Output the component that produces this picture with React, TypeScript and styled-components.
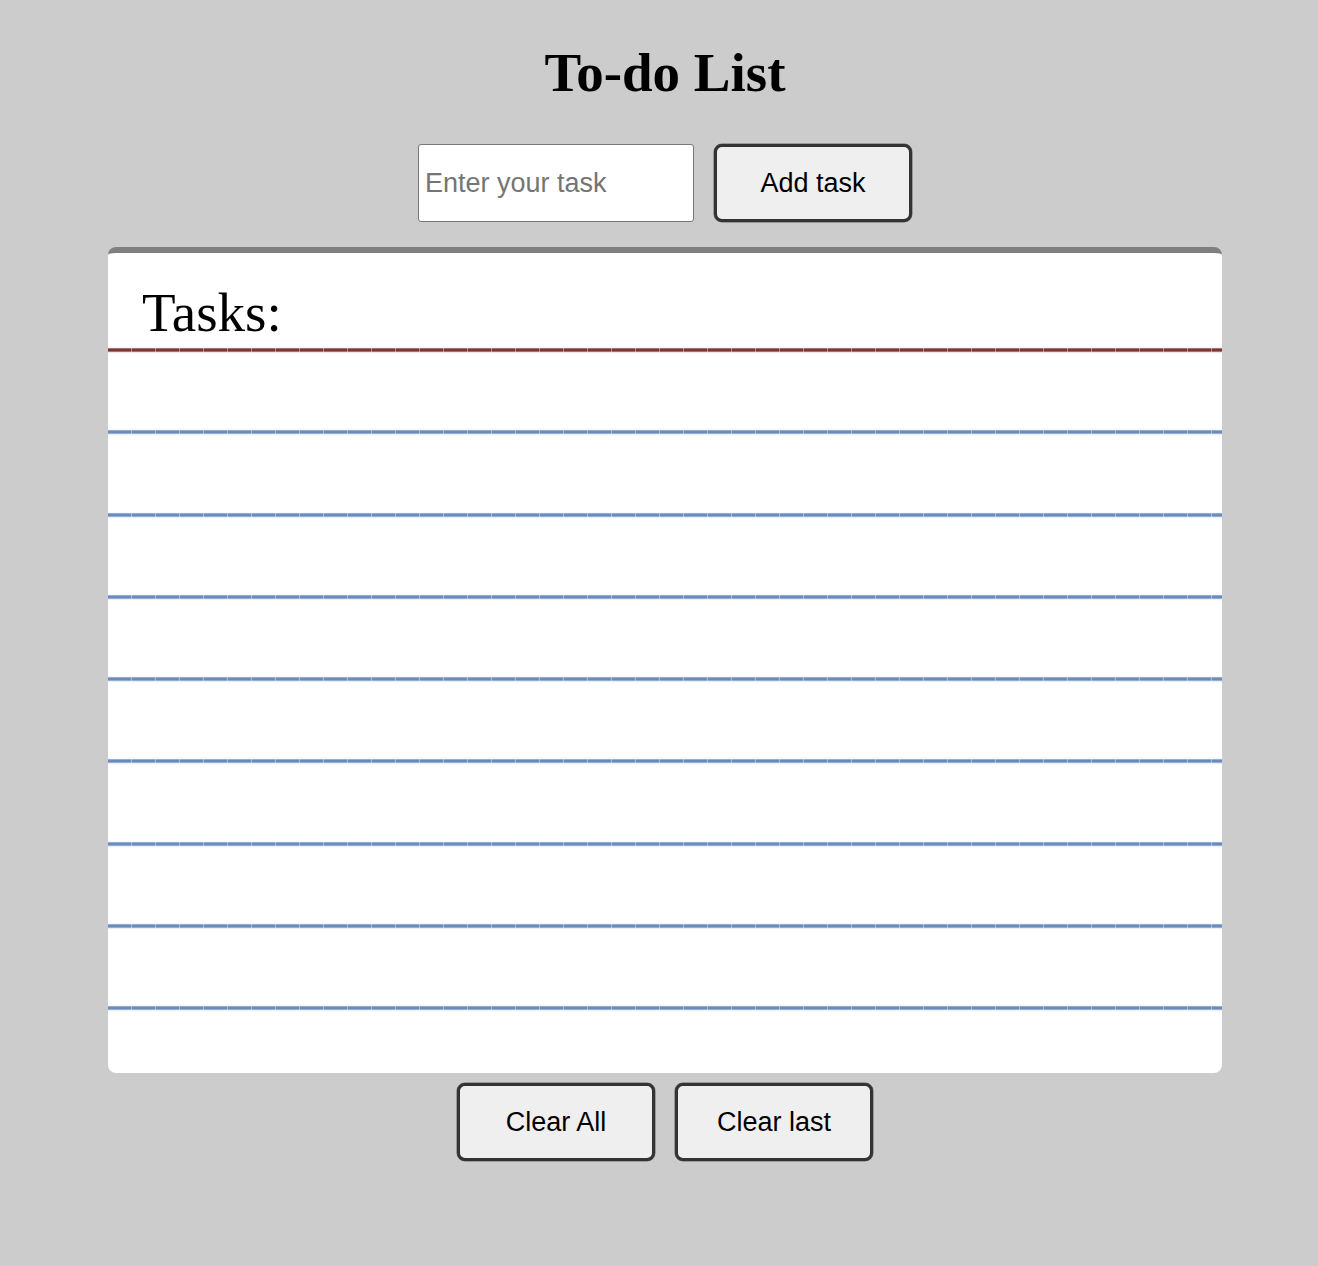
import React, { useState } from 'react';
import styled, { createGlobalStyle } from 'styled-components';

const GlobalStyle = createGlobalStyle`
	html, body {
		margin: 0;
		padding: 0;
		background: #cccccc;
	}
`;

const Page = styled.div`
	display: flex;
	flex-direction: column;
	align-items: center;
	padding: 41px 0 80px 12px;
	font-family: "Liberation Serif", "Times New Roman", serif;
`;

const Title = styled.h1`
	margin: 0;
	font-size: 55px;
	font-weight: bold;
	line-height: normal;
	color: #000;
`;

const Form = styled.div`
	display: flex;
	gap: 20px;
	margin-top: 40px;
`;

const TaskInput = styled.input`
	box-sizing: border-box;
	width: 276px;
	height: 78px;
	padding: 0 6px;
	border: 1px solid #767676;
	border-radius: 3px;
	background: #fff;
	font-family: "Liberation Sans", Arial, sans-serif;
	font-size: 27px;
	color: #000;

	&::placeholder {
		color: #757575;
	}
`;

const Button = styled.button`
	box-sizing: border-box;
	width: 198px;
	height: 78px;
	border: 3px solid #333;
	border-radius: 8px;
	box-shadow: 0 0 0 0.5px #666;
	background: #efefef;
	font-family: "Liberation Sans", Arial, sans-serif;
	font-size: 27px;
	color: #000;
	cursor: pointer;
`;

const Card = styled.div`
	box-sizing: border-box;
	width: 1114px;
	height: 826px;
	margin-top: 25px;
	border-top: 6px solid #808080;
	border-radius: 8px;
	background: #fff;
	overflow: hidden;
`;

const Header = styled.div`
	box-sizing: border-box;
	height: 95px;
	padding: 28px 0 0 34px;
`;

const Heading = styled.h2`
	margin: 0;
	font-size: 55px;
	font-weight: normal;
	line-height: normal;
	color: #000;
`;

const Rule = styled.div<{ $color: string; $edge: string }>`
	height: 4px;
	background:
		repeating-linear-gradient(
			to right,
			transparent 0,
			transparent 23px,
			rgba(255, 255, 255, 0.4) 23px,
			rgba(255, 255, 255, 0.4) 24px
		),
		linear-gradient(
			to bottom,
			${(p) => p.$edge} 0,
			${(p) => p.$color} 25%,
			${(p) => p.$color} 75%,
			${(p) => p.$edge} 100%
		);
	box-shadow: 0 0 1.5px 0.5px ${(p) => p.$edge};
`;

const Row = styled.div`
	height: 78.3px;
	display: flex;
	align-items: flex-end;
	padding: 0 34px 6px;
	box-sizing: border-box;
	font-size: 32px;
`;

const Actions = styled.div`
	display: flex;
	gap: 20px;
	margin-top: 10px;
`;

const LINES = 8;

const App = () => {
	const [task, setTask] = useState('');
	const [tasks, setTasks] = useState<string[]>([]);

	const addTask = () => {
		if (!task.trim()) return;
		setTasks([...tasks, task.trim()]);
		setTask('');
	};

	return (
		<>
			<GlobalStyle />
			<Page>
				<Title>To-do List</Title>
				<Form>
					<TaskInput
						placeholder="Enter your task"
						value={task}
						onChange={(event) => setTask(event.target.value)}
						onKeyDown={(event) => event.key === 'Enter' && addTask()}
					/>
					<Button onClick={addTask}>Add task</Button>
				</Form>
				<Card>
					<Header>
						<Heading>Tasks:</Heading>
					</Header>
					<Rule $color="#7a3535" $edge="rgba(180, 110, 110, 0.55)" />
					{Array.from({ length: LINES }).map((_, i) => (
						<React.Fragment key={i}>
							<Row>{tasks[i]}</Row>
							<Rule $color="#6a8bbb" $edge="rgba(140, 168, 210, 0.55)" />
						</React.Fragment>
					))}
				</Card>
				<Actions>
					<Button onClick={() => setTasks([])}>Clear All</Button>
					<Button onClick={() => setTasks(tasks.slice(0, -1))}>Clear last</Button>
				</Actions>
			</Page>
		</>
	);
};

export default App;
